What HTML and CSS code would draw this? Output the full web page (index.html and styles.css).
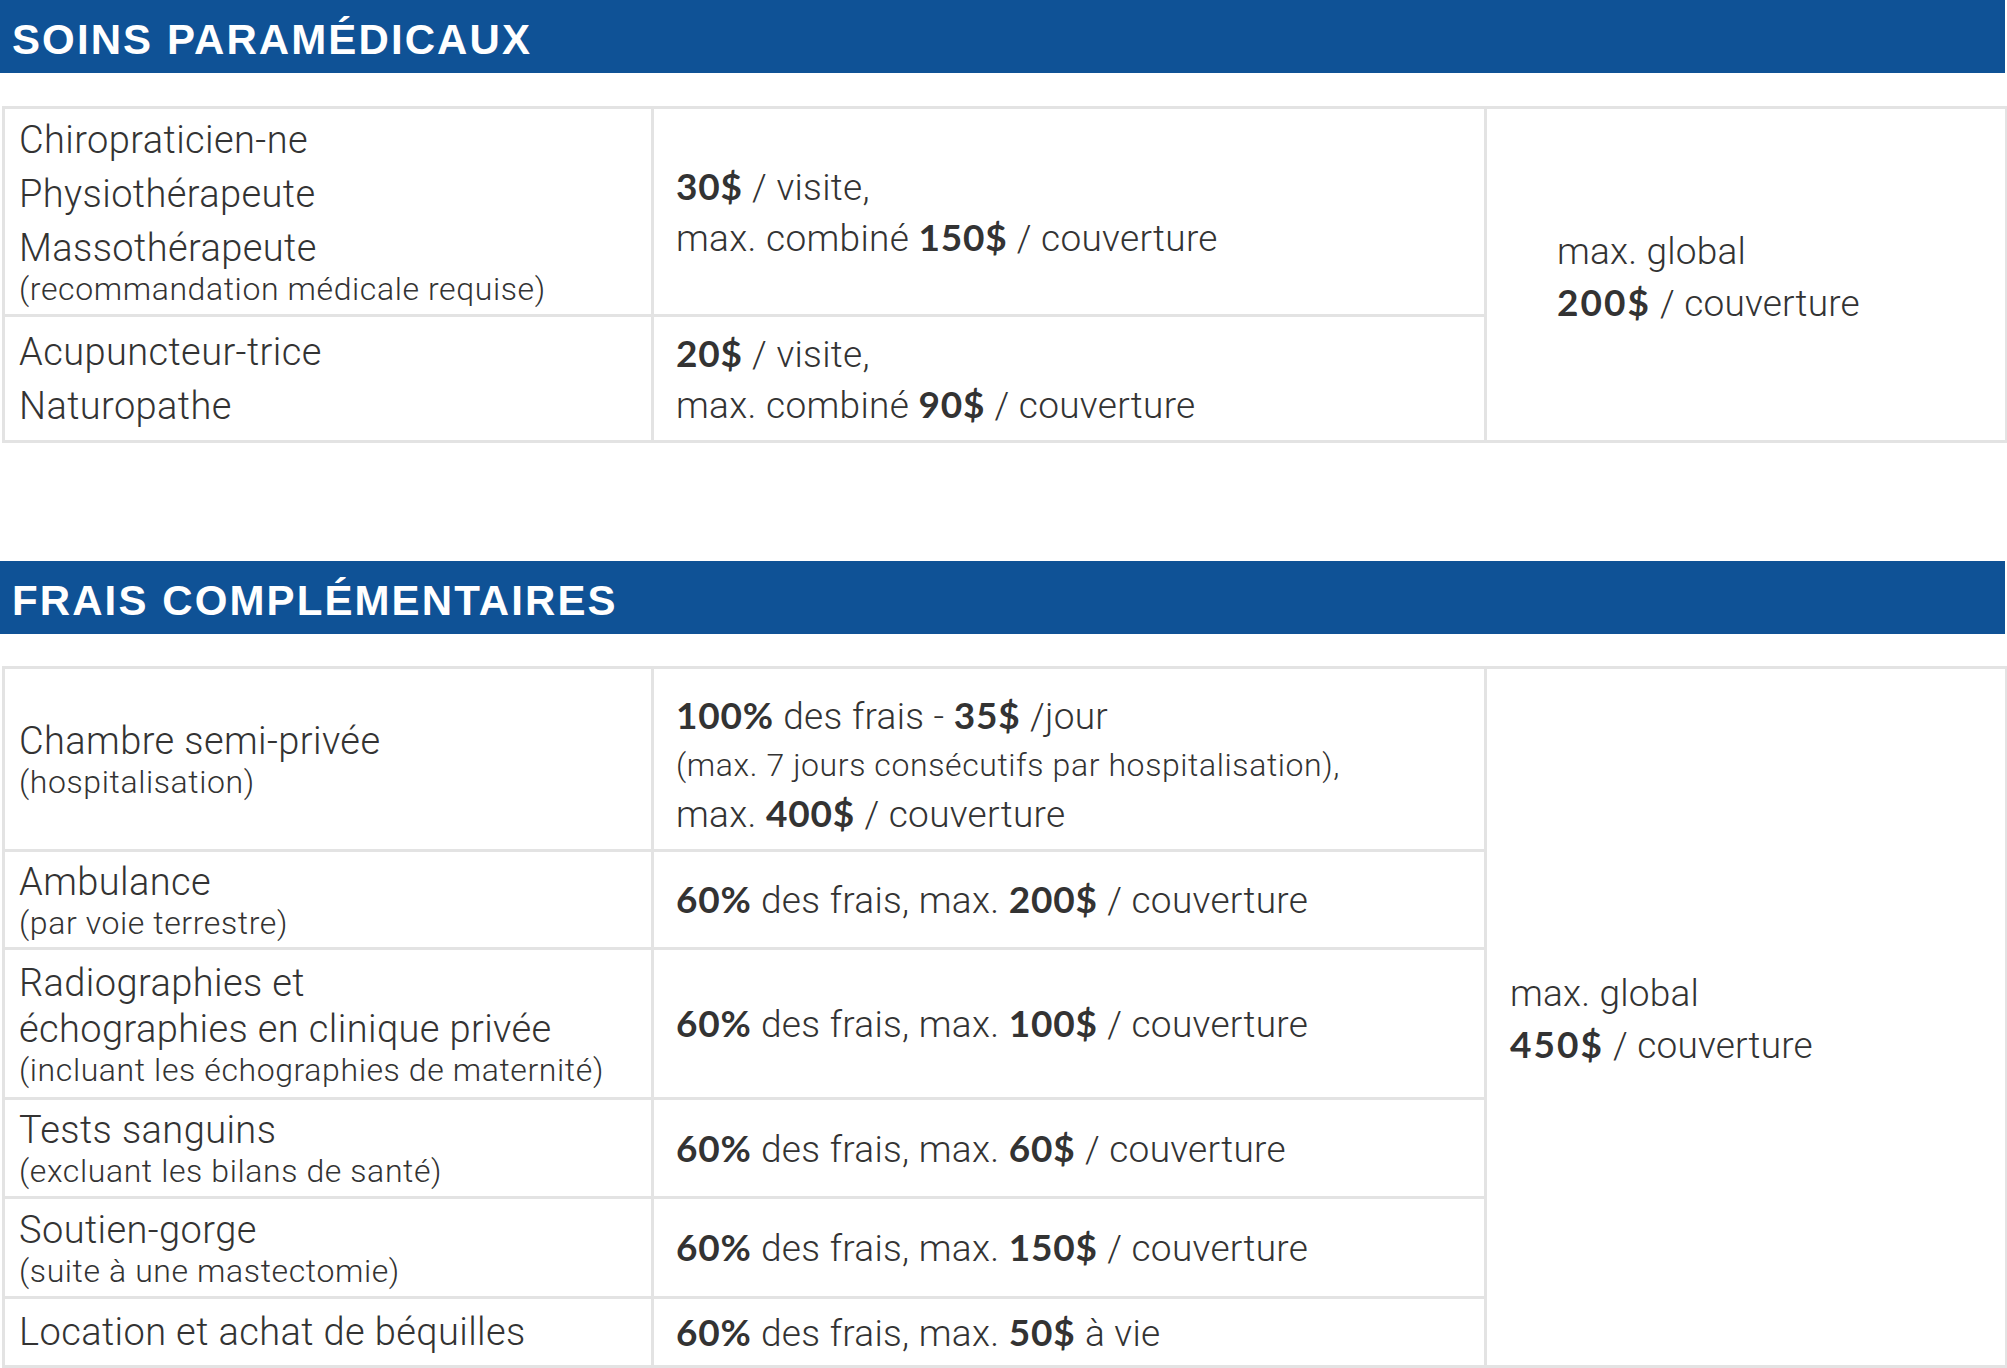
FILE: index.html
```html
<!DOCTYPE html>
<html lang="fr">
<head>
<meta charset="utf-8">
<title>Soins paramédicaux et frais complémentaires</title>
<link rel="stylesheet" href="styles.css">
</head>
<body>
<main class="page">
  <section class="block block--first">
    <h2 class="band">SOINS PARAMÉDICAUX</h2>
    <table class="grid">
      <colgroup>
        <col class="c1"><col class="c2"><col class="c3">
      </colgroup>
      <tbody>
        <tr class="r-para1">
          <td class="name name--list">
            <div class="item">Chiropraticien-ne</div>
            <div class="item">Physiothérapeute</div>
            <div class="item">Massothérapeute</div>
            <div class="note note--tight">(recommandation médicale requise)</div>
          </td>
          <td class="amount">
            <div><b>30$</b> / visite,</div>
            <div>max. combiné <b>150$</b> / couverture</div>
          </td>
          <td class="global global--para" rowspan="2">
            <div>max. global</div>
            <div><b>200$</b> / couverture</div>
          </td>
        </tr>
        <tr class="r-para2">
          <td class="name name--list">
            <div class="item">Acupuncteur-trice</div>
            <div class="item">Naturopathe</div>
          </td>
          <td class="amount">
            <div><b>20$</b> / visite,</div>
            <div>max. combiné <b>90$</b> / couverture</div>
          </td>
        </tr>
      </tbody>
    </table>
  </section>

  <section class="block block--second">
    <h2 class="band">FRAIS COMPLÉMENTAIRES</h2>
    <table class="grid">
      <colgroup>
        <col class="c1"><col class="c2"><col class="c3">
      </colgroup>
      <tbody>
        <tr class="r1">
          <td class="name">
            <div class="main">Chambre semi-privée</div>
            <div class="note">(hospitalisation)</div>
          </td>
          <td class="amount amount--multi">
            <div><b>100%</b> des frais - <b>35$</b> /jour</div>
            <div class="small">(max. 7 jours consécutifs par hospitalisation),</div>
            <div>max. <b>400$</b> / couverture</div>
          </td>
          <td class="global global--frais" rowspan="6">
            <div>max. global</div>
            <div><b>450$</b> / couverture</div>
          </td>
        </tr>
        <tr class="r2">
          <td class="name">
            <div class="main">Ambulance</div>
            <div class="note">(par voie terrestre)</div>
          </td>
          <td class="amount"><div><b>60%</b> des frais, max. <b>200$</b> / couverture</div></td>
        </tr>
        <tr class="r3">
          <td class="name">
            <div class="main">Radiographies et<br>échographies en clinique privée</div>
            <div class="note">(incluant les échographies de maternité)</div>
          </td>
          <td class="amount"><div><b>60%</b> des frais, max. <b>100$</b> / couverture</div></td>
        </tr>
        <tr class="r4">
          <td class="name">
            <div class="main">Tests sanguins</div>
            <div class="note">(excluant les bilans de santé)</div>
          </td>
          <td class="amount"><div><b>60%</b> des frais, max. <b>60$</b> / couverture</div></td>
        </tr>
        <tr class="r5">
          <td class="name">
            <div class="main">Soutien-gorge</div>
            <div class="note">(suite à une mastectomie)</div>
          </td>
          <td class="amount"><div><b>60%</b> des frais, max. <b>150$</b> / couverture</div></td>
        </tr>
        <tr class="r6">
          <td class="name">
            <div class="main">Location et achat de béquilles</div>
          </td>
          <td class="amount"><div><b>60%</b> des frais, max. <b>50$</b> à vie</div></td>
        </tr>
      </tbody>
    </table>
  </section>
</main>
</body>
</html>
```

FILE: styles.css
```css
html, body {
  margin: 0;
  padding: 0;
  background: #ffffff;
}

body {
  font-family: Roboto, "Liberation Sans", sans-serif;
  font-weight: 300;
  color: #333333;
  width: 2007px;
}

.page {
  display: flex;
  flex-direction: column;
}

.block--second {
  margin-top: 118px;
}

.band {
  margin: 0;
  width: 2005px;
  height: 73px;
  box-sizing: border-box;
  padding-left: 12px;
  background: #0f5296;
  color: #ffffff;
  font-family: "Liberation Sans", Arial, sans-serif;
  font-weight: 700;
  font-size: 42px;
  letter-spacing: 2.1px;
  line-height: 79px;
}

.grid {
  margin: 33px 0 0 2px;
  width: 2003px;
  table-layout: fixed;
  border-collapse: collapse;
}

.block--second .grid {
  margin-top: 32px;
}

.c1 { width: 649px; }
.c2 { width: 833px; }
.c3 { width: 521px; }

.grid td {
  border: 3px solid #e3e3e3;
  vertical-align: middle;
  padding: 0;
}

b {
  font-family: Lato, "Liberation Sans", sans-serif;
  font-weight: 700;
  letter-spacing: 0.8px;
}

/* column 1 */
.name {
  padding-left: 14px !important;
  font-size: 38px;
  letter-spacing: 0.4px;
}

.name .main {
  line-height: 46px;
}

.name--list .item {
  line-height: 54px;
}

.note {
  font-size: 32px;
  line-height: 36px;
  letter-spacing: 0.6px;
}

.note--tight {
  margin-top: -4px;
  margin-bottom: 4px;
}

/* column 2 */
.amount {
  padding-left: 22px !important;
  font-size: 37px;
  line-height: 49px;
  letter-spacing: 0.3px;
}

.amount--multi {
  line-height: 48px;
  padding-top: 12px !important;
}

.amount .small {
  font-size: 32px;
  letter-spacing: 0.6px;
}

/* column 3 */
.global {
  font-size: 37px;
  line-height: 50px;
  letter-spacing: 0.2px;
  padding-top: 6px !important;
}

.global b {
  letter-spacing: 2px;
}

.global--para {
  padding-left: 70px !important;
}

.global--frais {
  padding-left: 23px !important;
}

/* row heights (including one border) */
.r-para1 { height: 208px; }
.r-para2 { height: 126px; }

.r1 { height: 183px; }
.r2 { height: 98px; }
.r3 { height: 150px; }
.r4 { height: 99px; }
.r5 { height: 100px; }
.r6 { height: 69px; }
```
